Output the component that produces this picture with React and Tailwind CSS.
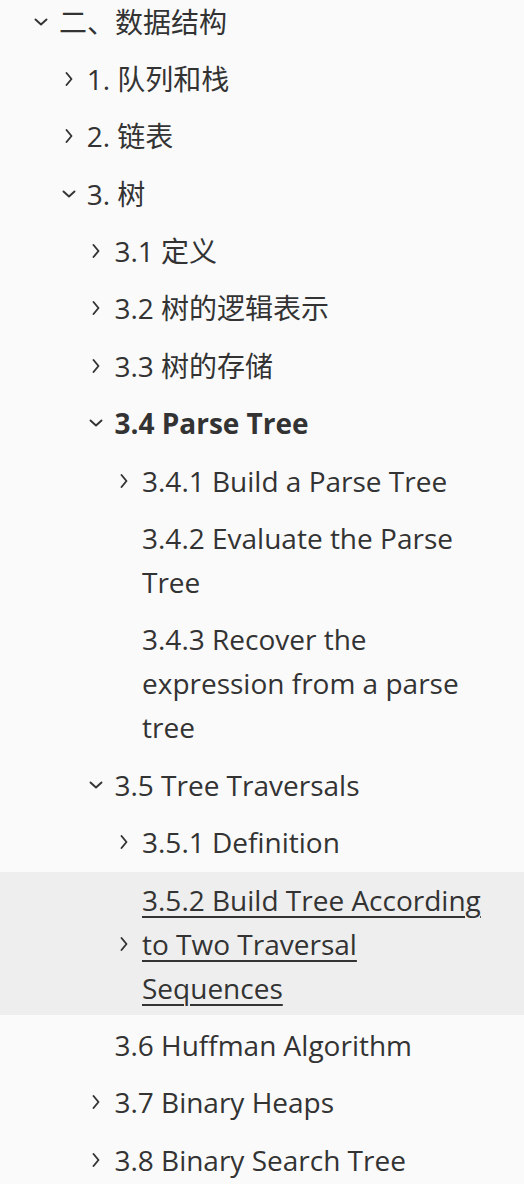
import React from 'react';

const items = [
    { level: 0, text: '二、数据结构', open: true },
    { level: 1, text: '1. 队列和栈', open: false },
    { level: 1, text: '2. 链表', open: false },
    { level: 1, text: '3. 树', open: true },
    { level: 2, text: '3.1 定义', open: false },
    { level: 2, text: '3.2 树的逻辑表示', open: false },
    { level: 2, text: '3.3 树的存储', open: false },
    { level: 2, text: '3.4 Parse Tree', open: true, bold: true },
    { level: 3, text: '3.4.1 Build a Parse Tree', open: false },
    { level: 3, text: '3.4.2 Evaluate the Parse Tree', leaf: true },
    { level: 3, text: '3.4.3 Recover the expression from a parse tree', leaf: true },
    { level: 2, text: '3.5 Tree Traversals', open: true },
    { level: 3, text: '3.5.1 Definition', open: false },
    { level: 3, text: '3.5.2 Build Tree According to Two Traversal Sequences', open: false, active: true },
    { level: 2, text: '3.6 Huffman Algorithm', leaf: true },
    { level: 2, text: '3.7 Binary Heaps', open: false },
    { level: 2, text: '3.8 Binary Search Tree', open: false },
];

const indent = ['pl-[31px]', 'pl-[58.7px]', 'pl-[86.4px]', 'pl-[114px]'];

const Chevron = ({ open }) => (
    <svg width="16" height="16" viewBox="0 0 16 16" fill="none" stroke="#333333" strokeWidth="1.9" strokeLinecap="round" strokeLinejoin="round">
        {open ? <path d="M2.5 5.5 L8 10.5 L13.5 5.5" /> : <path d="M5.5 2 L10.5 8 L5.5 14" />}
    </svg>
);

const TocRow = ({ item }) => (
    <div className={`flex items-center py-[5.5px] pr-[30px] ${indent[item.level]} ${item.active ? 'bg-[#eeeeee]' : ''}`}>
        <span className="w-[20px] shrink-0 flex justify-center">
            {!item.leaf && <Chevron open={item.open} />}
        </span>
        <span
            className={`ml-[8px] text-[28px] leading-[44px] text-[#333333] ${item.bold ? 'font-bold' : 'font-normal'} ${item.active ? 'underline decoration-[2px] underline-offset-[5px]' : ''}`}
        >
            {item.text}
        </span>
    </div>
);

export default function App() {
    return (
        <div className="w-[524px] h-[1184px] overflow-hidden bg-[#fafafa] font-['Open_Sans','Noto_Sans_CJK_SC',sans-serif]">
            <div className="mt-[-6px] flex flex-col gap-[2.4px]">
                {items.map((item, i) => (
                    <TocRow key={i} item={item} />
                ))}
            </div>
        </div>
    );
}
